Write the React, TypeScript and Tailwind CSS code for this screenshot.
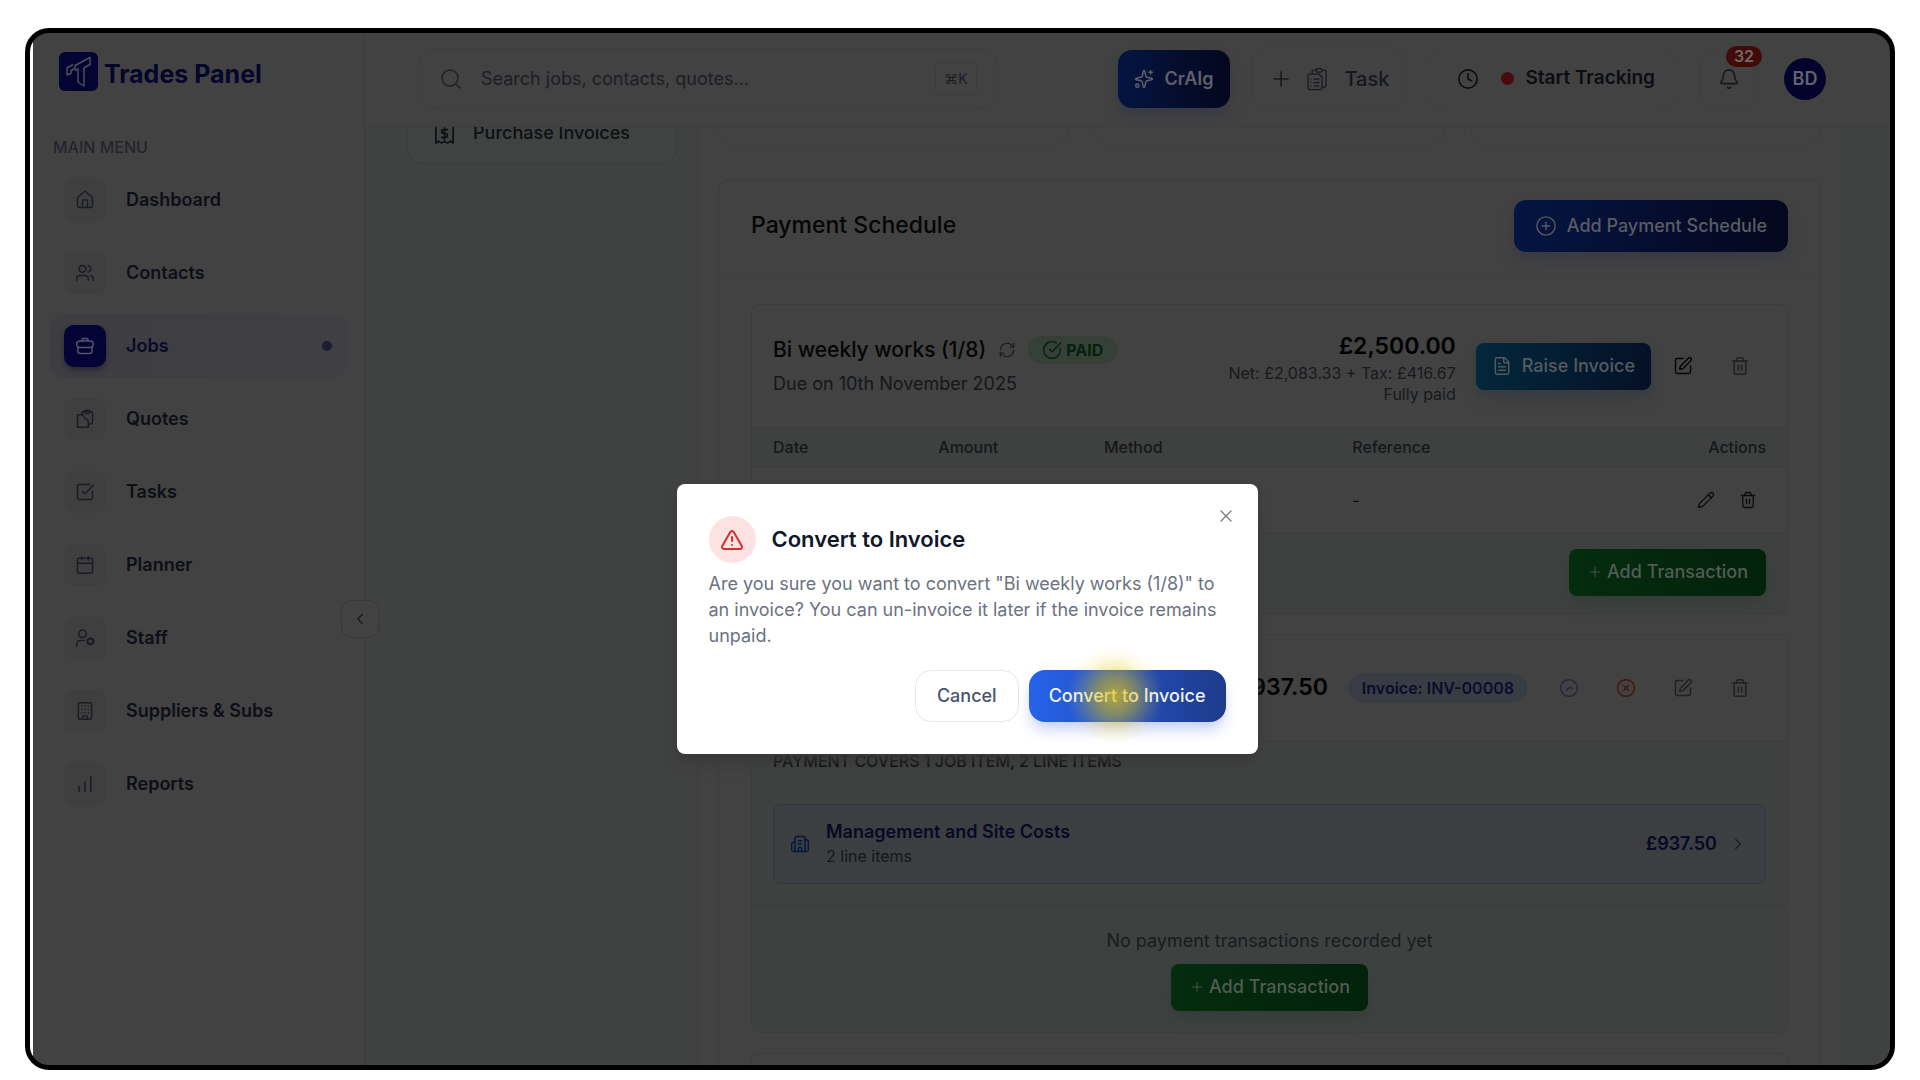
import {
  Bell,
  Building,
  Building2,
  Calendar,
  ChartNoAxesColumnIncreasing,
  ChevronLeft,
  ChevronRight,
  CircleCheckBig,
  CirclePlus,
  CircleX,
  Clock,
  FileText,
  House,
  Pencil,
  Plus,
  RefreshCw,
  Search,
  Sparkles,
  SquareCheckBig,
  SquarePen,
  Trash2,
  TriangleAlert,
  Users,
  X,
} from "lucide-react";
import type { ComponentType, ReactNode } from "react";
import React from "react";

type IconProps = {
  size?: number;
  strokeWidth?: number;
  className?: string;
};

type Icon = ComponentType<IconProps>;

const Svg = ({
  size = 24,
  strokeWidth = 1.75,
  className,
  children,
}: IconProps & { children: ReactNode }) => (
  <svg
    width={size}
    height={size}
    viewBox="0 0 24 24"
    fill="none"
    stroke="currentColor"
    strokeWidth={strokeWidth}
    strokeLinecap="round"
    strokeLinejoin="round"
    className={className}
    aria-hidden="true"
  >
    {children}
  </svg>
);

const JobsIcon: Icon = (props) => (
  <Svg {...props}>
    <path d="M8.5 6V4.5A1.5 1.5 0 0 1 10 3h4a1.5 1.5 0 0 1 1.5 1.5V6" />
    <path d="M6 6h12a4 4 0 0 1 4 4c0 2.2-2 3.8-4 3.8H6c-2 0-4-1.6-4-3.8a4 4 0 0 1 4-4z" />
    <path d="M3.5 13v5a3 3 0 0 0 3 3h11a3 3 0 0 0 3-3v-5" />
  </Svg>
);

const QuotesIcon: Icon = (props) => (
  <Svg {...props}>
    <path d="M8 7H3v15h13v-5" />
    <path d="M8 7c4 0 2 5 5 5s3 2 3 5" />
    <path d="M8 7V5a2 2 0 0 1 2-2h9a2 2 0 0 1 2 2v11a2 2 0 0 1-2 2h-3" />
    <path d="M11 3.5a3.5 2 0 0 0 7 0 3.5 2 0 0 0-7 0" />
  </Svg>
);

const TaskIcon: Icon = (props) => (
  <Svg {...props}>
    <path d="M7 6V5a2 2 0 0 1 2-2h2M17 3h2a2 2 0 0 1 2 2v13a2 2 0 0 1-2 2h-2" />
    <rect x="11" y="1.5" width="6" height="3.5" rx="1.5" />
    <path d="M4 7h10l3 3v11a1.5 1.5 0 0 1-1.5 1.5H4.5A1.5 1.5 0 0 1 3 21V8a1 1 0 0 1 1-1z" />
    <path d="M6 12h.01M9 12h5M6 15.5h.01M9 15.5h5M6 19h.01M9 19h5" />
  </Svg>
);

const StaffIcon: Icon = (props) => (
  <Svg {...props}>
    <circle cx="9" cy="7" r="4.5" />
    <path d="M2 21.5v-2A4.5 4.5 0 0 1 6.5 15H11" />
    <circle cx="18.5" cy="16" r="3.5" strokeWidth="2.5" />
  </Svg>
);

const PartialIcon: Icon = (props) => (
  <Svg {...props}>
    <circle cx="12" cy="12" r="10" />
    <path d="M9 14.5c1-2 3-3 6.500-3v1.5" />
  </Svg>
);

const ReceiptIcon: Icon = (props) => (
  <Svg {...props}>
    <path d="M3 2v20l3-2 3 2 3-2 3 2 3-2 3 2V2" />
    <path d="M15 8h-4a2 2 0 0 0 0 4h2a2 2 0 0 1 0 4H9M12 6v12" />
  </Svg>
);

type NavItem = {
  label: string;
  icon: Icon;
  active?: boolean;
};

const navItems: NavItem[] = [
  { label: "Dashboard", icon: House },
  { label: "Contacts", icon: Users },
  { label: "Jobs", icon: JobsIcon, active: true },
  { label: "Quotes", icon: QuotesIcon },
  { label: "Tasks", icon: SquareCheckBig },
  { label: "Planner", icon: Calendar },
  { label: "Staff", icon: StaffIcon },
  { label: "Suppliers & Subs", icon: Building },
  { label: "Reports", icon: ChartNoAxesColumnIncreasing },
];

const Logo = () => (
  <a href="#" className="flex items-center gap-[6px] pl-[10px]">
    <svg width="39" height="39" viewBox="0 0 39 39" aria-hidden="true">
      <rect width="39" height="39" rx="6" fill="#040433" />
      <path
        d="M14 12.5 8 16v7l4-1.5v-3l4-2v-3l15-8v7l-6 3.5V34l-6-4V17l-3 1.5"
        fill="none"
        stroke="#4e4e58"
        strokeWidth="1.5"
        strokeLinejoin="round"
      />
    </svg>
    <span className="pt-1 text-[25px] leading-8 font-bold text-[#05052c]">Trades Panel</span>
  </a>
);

const NavLink = ({ label, icon: Icon, active }: NavItem) => (
  <a
    href="#"
    className={
      active
        ? "flex h-16 items-center rounded-2xl bg-linear-to-r from-[#3d3d42] to-[#404044] px-[15px] text-[#0a0a28]"
        : "flex h-16 items-center rounded-2xl px-[15px] text-[#0d0f15]"
    }
  >
    <span
      className={
        active
          ? "flex size-[42px] items-center justify-center rounded-[10px] bg-[#030335] text-[#55556a] shadow-md shadow-[#2a2a38]"
          : "flex size-[42px] items-center justify-center rounded-[10px] bg-[#3f3f3f] text-[#1a1c24]"
      }
    >
      <Icon size={20} strokeWidth={1.75} />
    </span>
    <span className="ml-5 flex-1 text-lg font-semibold">{label}</span>
    {active && <span className="mr-px size-[10px] rounded-full bg-[#1c1c34]" />}
  </a>
);

const Sidebar = () => (
  <aside className="relative w-[332px] shrink-0 border-r border-[#3b3b3b] px-4 pt-[19px]">
    <Logo />
    <div className="mt-[46px] mb-[11px] pl-1 text-base leading-5 font-medium text-[#23252b]">
      MAIN MENU
    </div>
    <nav className="flex flex-col gap-[9px]">
      {navItems.map((item) => (
        <NavLink key={item.label} {...item} />
      ))}
    </nav>
    <button
      aria-label="Collapse sidebar"
      className="absolute top-[567px] -right-[15px] flex size-[38px] items-center justify-center rounded-[10px] border border-[#393939] bg-[#424242] text-[#1c1c1c]"
    >
      <ChevronLeft size={18} />
    </button>
  </aside>
);

const Header = () => (
  <header className="flex h-[94px] shrink-0 items-center border-b border-[#3d3f3f] pr-16 pb-0.5 pl-[53px]">
    <label className="flex h-[60px] w-[580px] items-center rounded-[18px] border border-[#3d3f3f] px-5">
      <Search size={24} className="text-[#1f2228]" strokeWidth={1.5} />
      <input
        type="search"
        aria-label="Search"
        placeholder="Search jobs, contacts, quotes..."
        className="ml-[18px] min-w-0 flex-1 bg-transparent text-lg outline-none placeholder:text-[#1b1e25]"
      />
      <kbd className="flex h-[33px] w-[42px] items-center justify-center rounded-md border border-[#3a3d3d] font-[Inter] text-sm text-[#1b1d22]">
        ⌘K
      </kbd>
    </label>
    <div className="ml-auto flex items-center">
      <button className="flex h-[58px] items-center gap-[10px] rounded-[14px] bg-linear-to-r from-[#041542] to-[#04071d] px-4 text-lg font-semibold text-[#5f6069] shadow-lg shadow-[#383a46]">
        <Sparkles size={20} strokeWidth={1.75} />
        CrAIg
      </button>
      <button className="ml-[21px] flex h-[63px] items-center rounded-2xl border border-[#3e4040] px-[17px] text-xl font-medium text-[#15181e]">
        <Plus size={24} strokeWidth={1.5} />
        <TaskIcon size={24} strokeWidth={1.25} className="mr-4 ml-3" />
        Task
      </button>
      <button className="ml-[21px] flex h-[63px] items-center rounded-2xl border border-[#3e4042] pr-[21px] pl-7 text-[19px] font-semibold text-[#0b0d12]">
        <Clock size={22} strokeWidth={1.75} />
        <span className="mr-[11px] ml-[22px] size-[13px] rounded-full bg-[#480c0c]" />
        Start Tracking
      </button>
      <button
        aria-label="Notifications"
        className="relative ml-[22px] flex size-[60px] items-center justify-center rounded-2xl border border-[#3e4040] text-[#15171c]"
      >
        <Bell size={22} strokeWidth={1.75} />
        <span className="absolute -top-1 -right-1 flex h-[21px] w-9 items-center justify-center rounded-full bg-[#430a0a] text-base font-semibold text-[#706a6a]">
          32
        </span>
      </button>
      <button className="ml-[25px] flex size-[42px] items-center justify-center rounded-full bg-[#04032b] text-lg font-semibold text-[#62626f]">
        BD
      </button>
    </div>
  </header>
);

const AddTransaction = () => (
  <button className="flex h-[47px] items-center gap-1 rounded-lg bg-linear-to-r from-[#042c0e] to-[#03220a] px-[18px] text-lg font-medium text-[#515c54] shadow-lg shadow-[#363d38]">
    <Plus size={16} strokeWidth={1.25} />
    Add Transaction
  </button>
);

type IconActionProps = {
  label: string;
  icon: Icon;
  className: string;
};

const IconAction = ({ label, icon: Icon, className }: IconActionProps) => (
  <button aria-label={label} className={`flex h-10 w-[57px] items-center justify-center ${className}`}>
    <Icon size={20} strokeWidth={1.75} />
  </button>
);

const PaidPayment = () => (
  <section className="rounded-lg border border-[#3c3e3d]">
    <div className="flex h-[122px] items-center pl-[21px]">
      <div className="pt-0.5">
        <div className="flex items-center">
          <h3 className="text-[21px] leading-7 font-medium text-[#050505]">Bi weekly works (1/8)</h3>
          <RefreshCw size={18} strokeWidth={1.5} className="mx-3 text-[#191b1f]" />
          <span className="flex h-7 items-center gap-1 rounded-full bg-[#364039] px-[14px] text-base font-bold text-[#03210d]">
            <CircleCheckBig size={20} strokeWidth={1.75} />
            PAID
          </span>
        </div>
        <p className="mt-[6px] text-lg text-[#15171b]">Due on 10th November 2025</p>
      </div>
      <div className="ml-auto pt-0.5 text-right text-base leading-[21px] text-[#17191d]">
        <div className="text-[23px] leading-[34px] font-semibold text-black">£2,500.00</div>
        <div>Net: £2,083.33 + Tax: £416.67</div>
        <div>Fully paid</div>
      </div>
      <button className="ml-5 flex h-[47px] items-center gap-[10px] rounded-lg bg-linear-to-r from-[#03273b] to-[#041126] px-4 text-lg font-medium text-[#535b62] shadow-lg shadow-[#373c3f]">
        <FileText size={20} strokeWidth={1.75} />
        Raise Invoice
      </button>
      <div className="mr-[19px] ml-[3px] flex">
        <IconAction label="Edit payment" icon={SquarePen} className="text-[#060606]" />
        <IconAction label="Delete payment" icon={Trash2} className="text-[#202020]" />
      </div>
    </div>
    <table className="w-full table-fixed text-left text-base">
      <colgroup>
        <col className="w-[18%]" />
        <col className="w-[16%]" />
        <col className="w-[24%]" />
        <col />
        <col />
      </colgroup>
      <thead className="border-y border-[#3b3d3c] bg-[#3f4140] text-[#15171b]">
        <tr className="h-[39px]">
          <th className="pl-[21px] font-medium">Date</th>
          <th className="font-medium">Amount</th>
          <th className="font-medium">Method</th>
          <th className="font-medium">Reference</th>
          <th className="pr-[21px] text-right font-medium">Actions</th>
        </tr>
      </thead>
      <tbody>
        <tr className="h-[66px] text-[#0b0b0b]">
          <td />
          <td />
          <td />
          <td>-</td>
          <td className="pr-[18px]">
            <div className="flex justify-end">
              <button aria-label="Edit transaction" className="p-3">
                <Pencil size={18} strokeWidth={1.75} />
              </button>
              <button aria-label="Delete transaction" className="p-3">
                <Trash2 size={18} strokeWidth={1.75} />
              </button>
            </div>
          </td>
        </tr>
      </tbody>
    </table>
    <div className="flex justify-end rounded-b-lg border-t border-[#3b3d3c] bg-[#3f4140] px-[21px] pt-[15px] pb-[17px]">
      <AddTransaction />
    </div>
  </section>
);

const InvoicedPayment = () => (
  <section className="mt-5 rounded-lg border border-[#3c3e3d]">
    <div className="flex h-[106px] items-center pl-[21px]">
      <div className="ml-auto text-[23px] font-semibold text-black">£937.50</div>
      <span className="ml-[21px] flex h-7 items-center rounded-full border border-[#343a44] bg-[#393c43] px-3 text-base font-semibold text-[#080d2b]">
        Invoice: INV-00008
      </span>
      <div className="mr-[19px] ml-[13px] flex">
        <IconAction label="Mark as part paid" icon={PartialIcon} className="text-[#23283a]" />
        <IconAction label="Void invoice" icon={CircleX} className="text-[#451409]" />
        <IconAction label="Edit payment" icon={SquarePen} className="text-[#202020]" />
        <IconAction label="Delete payment" icon={Trash2} className="text-[#202020]" />
      </div>
    </div>
    <div className="border-t border-[#3b3d3c] bg-[#3f4140] px-[21px] pt-[9px] pb-[21px]">
      <div className="text-base leading-5 font-medium text-[#08090b]">
        PAYMENT COVERS 1 JOB ITEM, 2 LINE ITEMS
      </div>
      <a
        href="#"
        className="mt-[33px] flex h-20 items-center rounded-lg border border-[#31353d] bg-[#3c3e41] pr-[18px] pl-4"
      >
        <Building2 size={20} strokeWidth={1.75} className="text-[#0a163a]" />
        <div className="ml-4 flex-1">
          <div className="text-lg leading-6 font-semibold text-[#070926]">Management and Site Costs</div>
          <div className="text-base leading-6 text-[#14161a]">2 line items</div>
        </div>
        <span className="mr-3 text-lg font-semibold text-[#070926]">£937.50</span>
        <ChevronRight size={18} strokeWidth={1.75} className="text-[#1b1d21]" />
      </a>
    </div>
    <div className="flex flex-col items-center gap-[9px] rounded-b-lg border-t border-[#3b3d3c] bg-[#3f4140] py-[21px]">
      <p className="text-lg text-[#191b1f]">No payment transactions recorded yet</p>
      <AddTransaction />
    </div>
  </section>
);

const JobPage = () => (
  <main className="flex flex-1 overflow-hidden bg-[#404241] pl-[42px]">
    <div className="h-[37px] w-[270px] rounded-b-2xl border border-t-0 border-[#3b3e3d] bg-[#414342]">
      <a
        href="#"
        className="-mt-2 flex items-center gap-[17px] pl-[25px] text-lg font-medium text-[#0d0f13]"
      >
        <ReceiptIcon size={23} />
        Purchase Invoices
      </a>
    </div>
    <div className="mr-12 ml-5 min-w-0 flex-1 border-x border-[#3d3f3f] bg-[#424242] px-5">
      <div className="grid h-[18px] grid-cols-3 gap-[26px]">
        <div className="rounded-b-xl border border-t-0 border-[#3f3f3f]" />
        <div className="rounded-b-xl border border-t-0 border-[#3f3f3f]" />
        <div className="rounded-b-xl border border-t-0 border-[#3f3f3f]" />
      </div>
      <div className="mt-[34px] rounded-t-xl border border-b-0 border-[#3d3d3d]">
        <div className="flex h-[96px] items-center justify-between border-b border-[#3f3f3f] px-8 pb-1">
          <h2 className="text-[23px] font-medium text-[#050505]">Payment Schedule</h2>
          <button className="flex h-[52px] items-center gap-[10px] rounded-xl bg-linear-to-r from-[#041542] to-[#04071d] px-[21px] text-lg font-medium text-[#5a5c64] shadow-lg shadow-[#383a46]">
            <CirclePlus size={22} strokeWidth={1.5} />
            Add Payment Schedule
          </button>
        </div>
        <div className="px-8 pt-7">
          <PaidPayment />
          <InvoicedPayment />
          <section className="mt-5 h-20 rounded-lg border border-[#3c3e3d]" />
        </div>
      </div>
    </div>
  </main>
);

const ConvertDialog = () => (
  <div className="absolute inset-0 flex items-start justify-center pt-[451px] pl-[14px]">
    <div
      role="dialog"
      aria-labelledby="dialog-title"
      className="relative w-[581px] rounded-lg bg-white p-8 shadow-lg shadow-[#383838]"
    >
      <button aria-label="Close" className="absolute top-[22px] right-[22px] text-[#777]">
        <X size={20} strokeWidth={1.5} />
      </button>
      <div className="flex items-center gap-4">
        <span className="flex size-[47px] items-center justify-center rounded-full bg-[#fee2e2] text-[#d92d2d]">
          <TriangleAlert size={24} />
        </span>
        <h2 id="dialog-title" className="text-[22px] font-semibold text-[#0f172a]">
          Convert to Invoice
        </h2>
      </div>
      <p className="mt-2 text-lg leading-[26px] text-[#6b7280]">
        Are you sure you want to convert "Bi weekly works (1/8)" to an invoice? You can un-invoice
        it later if the invoice remains unpaid.
      </p>
      <div className="mt-[21px] flex justify-end gap-[10px]">
        <button className="h-[52px] rounded-2xl border border-[#e5e7eb] px-[21px] text-lg font-medium text-[#475569]">
          Cancel
        </button>
        <button className="relative h-[52px] rounded-2xl bg-linear-to-r from-[#2563eb] to-[#1e3a8a] px-5 text-lg font-medium text-[#eef2ff] shadow-lg shadow-[#c5cff5]">
          Convert to Invoice
          {/* click highlight */}
          <span className="pointer-events-none absolute -top-[26px] left-[34px] size-[104px] rounded-full bg-[radial-gradient(circle,rgba(225,195,20,0.75)_0%,rgba(225,195,20,0.5)_25%,rgba(240,215,50,0.15)_50%,rgba(250,225,60,0)_66%)]" />
        </button>
      </div>
    </div>
  </div>
);

export default function App() {
  return (
    <div className="h-screen bg-white px-[25px] pt-7 pb-[10px] font-[Inter,sans-serif]">
      <div className="relative flex h-full overflow-hidden rounded-3xl border-[5px] border-black bg-[#424242]">
        <div className="w-[3px] shrink-0 bg-white" />
        <Sidebar />
        <div className="flex min-w-0 flex-1 flex-col">
          <Header />
          <JobPage />
        </div>
        <ConvertDialog />
      </div>
    </div>
  );
}
